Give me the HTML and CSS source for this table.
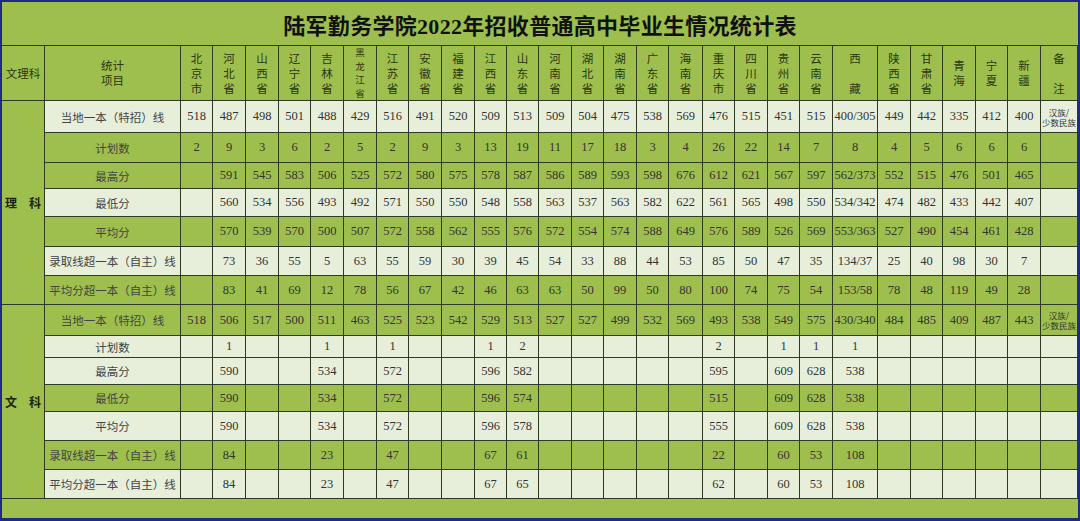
FILE: index.html
```html
<!DOCTYPE html>
<html lang="zh-CN">
<head>
<meta charset="utf-8">
<title>陆军勤务学院2022年招收普通高中毕业生情况统计表</title>
<link rel="stylesheet" href="styles.css">
</head>
<body>
<div class="frame">
  <div class="title">陆军勤务学院2022年招收普通高中毕业生情况统计表</div>
  <div class="table">
    <div class="side">
      <div class="s-head">文理科</div>
      <div class="s-li">理　科</div>
      <div class="s-wen">文　科</div>
    </div>
    <div class="main">
      <div class="row head">
        <span>统计<br>项目</span>
        <span>北<br>京<br>市</span><span>河<br>北<br>省</span><span>山<br>西<br>省</span><span>辽<br>宁<br>省</span><span>吉<br>林<br>省</span><span class="tight">黑<br>龙<br>江<br>省</span><span>江<br>苏<br>省</span><span>安<br>徽<br>省</span><span>福<br>建<br>省</span><span>江<br>西<br>省</span><span>山<br>东<br>省</span><span>河<br>南<br>省</span><span>湖<br>北<br>省</span><span>湖<br>南<br>省</span><span>广<br>东<br>省</span><span>海<br>南<br>省</span><span>重<br>庆<br>市</span><span>四<br>川<br>省</span><span>贵<br>州<br>省</span><span>云<br>南<br>省</span><span>西<br><br>藏</span><span>陕<br>西<br>省</span><span>甘<br>肃<br>省</span><span>青<br>海</span><span>宁<br>夏</span><span>新<br>疆</span><span>备<br><br>注</span>
      </div>

      <div class="row L h32">
        <span class="lab">当地一本（特招）线</span>
        <span>518</span><span>487</span><span>498</span><span>501</span><span>488</span><span>429</span><span>516</span><span>491</span><span>520</span><span>509</span><span>513</span><span>509</span><span>504</span><span>475</span><span>538</span><span>569</span><span>476</span><span>515</span><span>451</span><span>515</span><span>400/305</span><span>449</span><span>442</span><span>335</span><span>412</span><span>400</span><span class="note">汉族/<br>少数民族</span>
      </div>
      <div class="row G h30">
        <span class="lab">计划数</span>
        <span>2</span><span>9</span><span>3</span><span>6</span><span>2</span><span>5</span><span>2</span><span>9</span><span>3</span><span>13</span><span>19</span><span>11</span><span>17</span><span>18</span><span>3</span><span>4</span><span>26</span><span>22</span><span>14</span><span>7</span><span>8</span><span>4</span><span>5</span><span>6</span><span>6</span><span>6</span><span></span>
      </div>
      <div class="row G h26">
        <span class="lab">最高分</span>
        <span></span><span>591</span><span>545</span><span>583</span><span>506</span><span>525</span><span>572</span><span>580</span><span>575</span><span>578</span><span>587</span><span>586</span><span>589</span><span>593</span><span>598</span><span>676</span><span>612</span><span>621</span><span>567</span><span>597</span><span>562/373</span><span>552</span><span>515</span><span>476</span><span>501</span><span>465</span><span></span>
      </div>
      <div class="row L h28">
        <span class="lab">最低分</span>
        <span></span><span>560</span><span>534</span><span>556</span><span>493</span><span>492</span><span>571</span><span>550</span><span>550</span><span>548</span><span>558</span><span>563</span><span>537</span><span>563</span><span>582</span><span>622</span><span>561</span><span>565</span><span>498</span><span>550</span><span>534/342</span><span>474</span><span>482</span><span>433</span><span>442</span><span>407</span><span></span>
      </div>
      <div class="row G h30">
        <span class="lab">平均分</span>
        <span></span><span>570</span><span>539</span><span>570</span><span>500</span><span>507</span><span>572</span><span>558</span><span>562</span><span>555</span><span>576</span><span>572</span><span>554</span><span>574</span><span>588</span><span>649</span><span>576</span><span>589</span><span>526</span><span>569</span><span>553/363</span><span>527</span><span>490</span><span>454</span><span>461</span><span>428</span><span></span>
      </div>
      <div class="row L h29">
        <span class="lab">录取线超一本（自主）线</span>
        <span></span><span>73</span><span>36</span><span>55</span><span>5</span><span>63</span><span>55</span><span>59</span><span>30</span><span>39</span><span>45</span><span>54</span><span>33</span><span>88</span><span>44</span><span>53</span><span>85</span><span>50</span><span>47</span><span>35</span><span>134/37</span><span>25</span><span>40</span><span>98</span><span>30</span><span>7</span><span></span>
      </div>
      <div class="row G h29">
        <span class="lab">平均分超一本（自主）线</span>
        <span></span><span>83</span><span>41</span><span>69</span><span>12</span><span>78</span><span>56</span><span>67</span><span>42</span><span>46</span><span>63</span><span>63</span><span>50</span><span>99</span><span>50</span><span>80</span><span>100</span><span>74</span><span>75</span><span>54</span><span>153/58</span><span>78</span><span>48</span><span>119</span><span>49</span><span>28</span><span></span>
      </div>

      <div class="row G h31">
        <span class="lab">当地一本（特招）线</span>
        <span>518</span><span>506</span><span>517</span><span>500</span><span>511</span><span>463</span><span>525</span><span>523</span><span>542</span><span>529</span><span>513</span><span>527</span><span>527</span><span>499</span><span>532</span><span>569</span><span>493</span><span>538</span><span>549</span><span>575</span><span>430/340</span><span>484</span><span>485</span><span>409</span><span>487</span><span>443</span><span class="note">汉族/<br>少数民族</span>
      </div>
      <div class="row L h22">
        <span class="lab">计划数</span>
        <span></span><span>1</span><span></span><span></span><span>1</span><span></span><span>1</span><span></span><span></span><span>1</span><span>2</span><span></span><span></span><span></span><span></span><span></span><span>2</span><span></span><span>1</span><span>1</span><span>1</span><span></span><span></span><span></span><span></span><span></span><span></span>
      </div>
      <div class="row L h27">
        <span class="lab">最高分</span>
        <span></span><span>590</span><span></span><span></span><span>534</span><span></span><span>572</span><span></span><span></span><span>596</span><span>582</span><span></span><span></span><span></span><span></span><span></span><span>595</span><span></span><span>609</span><span>628</span><span>538</span><span></span><span></span><span></span><span></span><span></span><span></span>
      </div>
      <div class="row G h27">
        <span class="lab">最低分</span>
        <span></span><span>590</span><span></span><span></span><span>534</span><span></span><span>572</span><span></span><span></span><span>596</span><span>574</span><span></span><span></span><span></span><span></span><span></span><span>515</span><span></span><span>609</span><span>628</span><span>538</span><span></span><span></span><span></span><span></span><span></span><span></span>
      </div>
      <div class="row L h29">
        <span class="lab">平均分</span>
        <span></span><span>590</span><span></span><span></span><span>534</span><span></span><span>572</span><span></span><span></span><span>596</span><span>578</span><span></span><span></span><span></span><span></span><span></span><span>555</span><span></span><span>609</span><span>628</span><span>538</span><span></span><span></span><span></span><span></span><span></span><span></span>
      </div>
      <div class="row G h29">
        <span class="lab">录取线超一本（自主）线</span>
        <span></span><span>84</span><span></span><span></span><span>23</span><span></span><span>47</span><span></span><span></span><span>67</span><span>61</span><span></span><span></span><span></span><span></span><span></span><span>22</span><span></span><span>60</span><span>53</span><span>108</span><span></span><span></span><span></span><span></span><span></span><span></span>
      </div>
      <div class="row L h29">
        <span class="lab">平均分超一本（自主）线</span>
        <span></span><span>84</span><span></span><span></span><span>23</span><span></span><span>47</span><span></span><span></span><span>67</span><span>65</span><span></span><span></span><span></span><span></span><span></span><span>62</span><span></span><span>60</span><span>53</span><span>108</span><span></span><span></span><span></span><span></span><span></span><span></span>
      </div>
    </div>
  </div>
  <div class="footer"></div>
</div>
</body>
</html>
```
FILE: styles.css
```css
html, body {
  margin: 0;
  padding: 0;
  background: #1f2a86;
}

.frame {
  width: 1080px;
  height: 521px;
  box-sizing: border-box;
  border: 2px solid #1f2a86;
  border-bottom-width: 3px;
  background: #9ebf4d;
  display: flex;
  flex-direction: column;
  overflow: hidden;
}

.title {
  height: 43px;
  border-bottom: 1px solid #2e3a22;
  display: flex;
  align-items: center;
  justify-content: center;
  font-family: "Liberation Serif", "Noto Sans CJK SC", serif;
  font-weight: bold;
  font-size: 22px;
  color: #111;
  letter-spacing: 0.3px;
}

.table {
  display: flex;
}

.side {
  width: 43px;
  display: flex;
  flex-direction: column;
}

.side > div {
  box-sizing: border-box;
  border-right: 1px solid #2e3a22;
  border-bottom: 1px solid #2e3a22;
  display: flex;
  align-items: center;
  justify-content: center;
  font-family: "Noto Sans CJK SC", sans-serif;
  font-size: 11.5px;
  color: #2b3512;
}

.s-head { height: 55px; }
.s-li { height: 204px; font-weight: bold; }
.s-wen { height: 194px; font-weight: bold; }
.side .s-li, .side .s-wen { font-size: 12px; color: #1d2410; }

.main {
  display: flex;
  flex-direction: column;
}

.row {
  display: grid;
  grid-template-columns: 136px 32px 33px 33px 32px 33px 33px 32px 33px 33px 32px 32px 33px 32px 33px 32px 34px 32px 33px 32px 33px 45px 33px 32px 33px 32px 33px 37px;
}

.row > span {
  box-sizing: border-box;
  border-right: 1px solid #2e3a22;
  border-bottom: 1px solid #2e3a22;
  display: flex;
  align-items: center;
  justify-content: center;
  text-align: center;
  overflow: hidden;
  font-family: "Liberation Serif", "Noto Sans CJK SC", serif;
  font-size: 12.5px;
  color: #333;
  white-space: nowrap;
}

.row.head { height: 55px; }
.row.head > span {
  font-family: "Noto Sans CJK SC", sans-serif;
  font-size: 11.5px;
  line-height: 15px;
  color: #2b3512;
}

.row.head > span.tight {
  line-height: 13.5px;
  font-size: 9.5px;
}

.row > span.lab {
  font-family: "Noto Sans CJK SC", sans-serif;
  font-size: 11.5px;
  color: #444;
}

.row > span.note {
  font-family: "Noto Sans CJK SC", sans-serif;
  font-size: 8.5px;
  line-height: 10px;
  color: #333;
  white-space: normal;
}

.L > span { background: #e7efdb; }
.G > span { background: #9ebf4d; }

.h32 { height: 32px; }
.h31 { height: 31px; }
.h30 { height: 30px; }
.h29 { height: 29px; }
.h28 { height: 28px; }
.h27 { height: 27px; }
.h26 { height: 26px; }
.h22 { height: 22px; }

.footer {
  flex: 1;
}
```
